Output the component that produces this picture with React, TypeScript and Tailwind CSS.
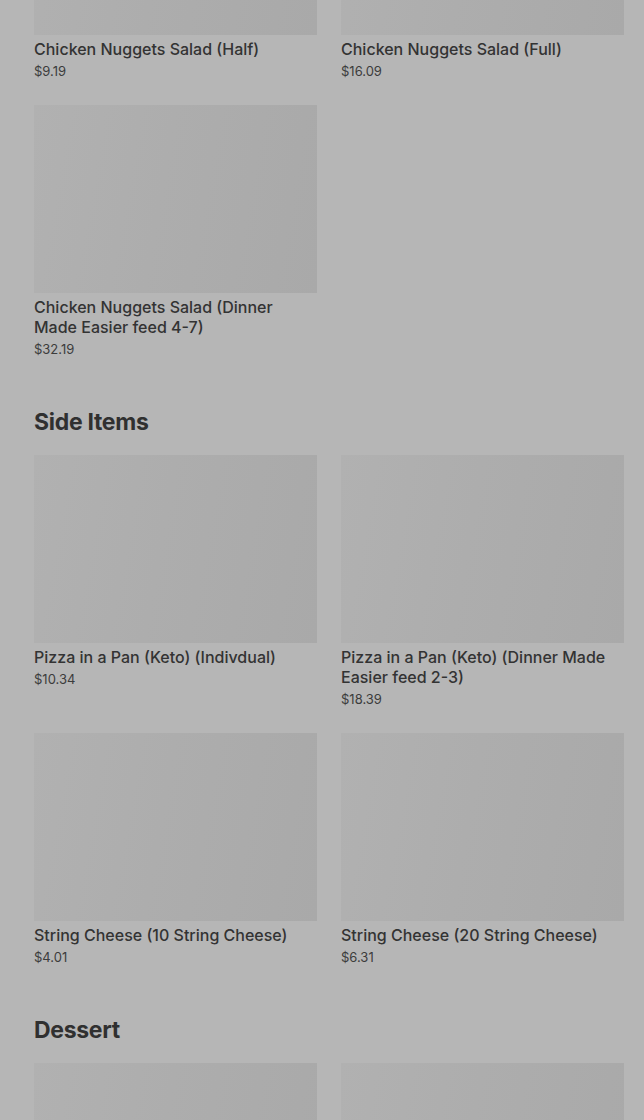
import React from "react";

type Item = { name: string; price: string };

const sections: { title?: string; items: Item[]; imageOnly?: boolean }[] = [
  {
    items: [
      { name: "Chicken Nuggets Salad (Half)", price: "$9.19" },
      { name: "Chicken Nuggets Salad (Full)", price: "$16.09" },
      { name: "Chicken Nuggets Salad (Dinner Made Easier feed 4-7)", price: "$32.19" },
    ],
  },
  {
    title: "Side Items",
    items: [
      { name: "Pizza in a Pan (Keto) (Indivdual)", price: "$10.34" },
      { name: "Pizza in a Pan (Keto) (Dinner Made Easier feed 2-3)", price: "$18.39" },
      { name: "String Cheese (10 String Cheese)", price: "$4.01" },
      { name: "String Cheese (20 String Cheese)", price: "$6.31" },
    ],
  },
  {
    title: "Dessert",
    imageOnly: true,
    items: [
      { name: "", price: "" },
      { name: "", price: "" },
    ],
  },
];

function Card({ item, imageOnly }: { item: Item; imageOnly?: boolean }) {
  return (
    <div className="flex flex-col">
      <div className="h-[188px] w-full bg-[linear-gradient(100deg,#b1b1b1_0%,#adadad_45%,#a9a9a9_100%)]" />
      {!imageOnly && (
        <>
          <div className="mt-[4px] text-[16px] leading-[20px] font-medium text-[#333333]">
            {item.name}
          </div>
          <div className="mt-[2px] text-[13px] leading-[20px] text-[#3c3c3c]">{item.price}</div>
        </>
      )}
    </div>
  );
}

export default function App() {
  return (
    <div
      className="w-[644px] h-[1120px] overflow-hidden bg-[#b6b6b6]"
      style={{ fontFamily: "Inter, 'Noto Sans', sans-serif" }}
    >
      <div className="-mt-[153px] pl-[34px] pr-[20px]">
        {sections.map((s, i) => (
          <div key={i}>
            {s.title && (
              <h2 className="mt-[47px] mb-[17px] text-[23px] leading-[32px] font-bold tracking-[-0.3px] text-[#303030]">
                {s.title}
              </h2>
            )}
            <div className="grid grid-cols-2 gap-x-[24px] gap-y-[24px]">
              {s.items.map((it, j) => (
                <Card key={j} item={it} imageOnly={s.imageOnly} />
              ))}
            </div>
          </div>
        ))}
      </div>
    </div>
  );
}
